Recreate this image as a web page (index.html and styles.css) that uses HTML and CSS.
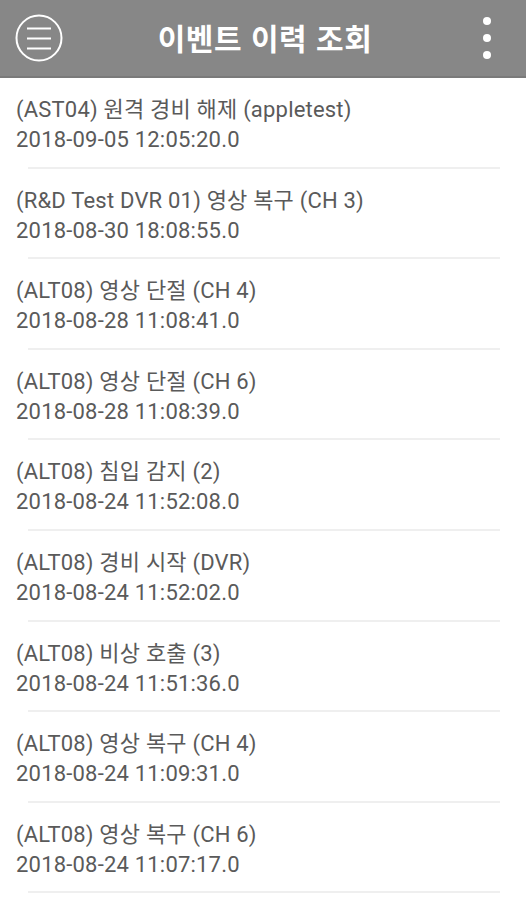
FILE: index.html
```
<!DOCTYPE html>
<html lang="ko">
<head>
<meta charset="utf-8">
<link rel="stylesheet" href="styles.css">
</head>
<body>
<header class="appbar">
  <button class="menu-btn" aria-label="메뉴">
    <svg width="48" height="48" viewBox="0 0 48 48">
      <circle cx="24" cy="24" r="22.5" fill="none" stroke="#fff" stroke-width="2"/>
      <line x1="12" y1="14.5" x2="36" y2="14.5" stroke="#fff" stroke-width="2"/>
      <line x1="12" y1="24.5" x2="36" y2="24.5" stroke="#fff" stroke-width="2"/>
      <line x1="12" y1="34.5" x2="36" y2="34.5" stroke="#fff" stroke-width="2"/>
    </svg>
  </button>
  <h1 class="title">이벤트 이력 조회</h1>
  <button class="more-btn" aria-label="더보기">
    <span class="dot"></span><span class="dot"></span><span class="dot"></span>
  </button>
</header>
<ul class="events">
  <li class="event"><div class="name">(AST04) 원격 경비 해제 (appletest)</div><div class="time">2018-09-05 12:05:20.0</div></li>
  <li class="event"><div class="name">(R&amp;D Test DVR 01) 영상 복구 (CH 3)</div><div class="time">2018-08-30 18:08:55.0</div></li>
  <li class="event"><div class="name">(ALT08) 영상 단절 (CH 4)</div><div class="time">2018-08-28 11:08:41.0</div></li>
  <li class="event"><div class="name">(ALT08) 영상 단절 (CH 6)</div><div class="time">2018-08-28 11:08:39.0</div></li>
  <li class="event"><div class="name">(ALT08) 침입 감지 (2)</div><div class="time">2018-08-24 11:52:08.0</div></li>
  <li class="event"><div class="name">(ALT08) 경비 시작 (DVR)</div><div class="time">2018-08-24 11:52:02.0</div></li>
  <li class="event"><div class="name">(ALT08) 비상 호출 (3)</div><div class="time">2018-08-24 11:51:36.0</div></li>
  <li class="event"><div class="name">(ALT08) 영상 복구 (CH 4)</div><div class="time">2018-08-24 11:09:31.0</div></li>
  <li class="event"><div class="name">(ALT08) 영상 복구 (CH 6)</div><div class="time">2018-08-24 11:07:17.0</div></li>
</ul>
</body>
</html>
```
FILE: styles.css
```
* { box-sizing: border-box; }
html, body { margin: 0; padding: 0; background: #fff; }
body {
  font-family: Roboto, "Noto Sans CJK KR", sans-serif;
  width: 526px;
  height: 900px;
  overflow: hidden;
}
.appbar {
  height: 78px;
  background: #878787;
  border-bottom: 2px solid #7a7a7a;
  display: flex;
  align-items: center;
  position: relative;
}
.menu-btn, .more-btn {
  background: none;
  border: 0;
  padding: 0;
  cursor: pointer;
}
.menu-btn {
  margin-left: 15px;
  width: 48px;
  height: 48px;
  margin-top: -1px;
}
.menu-btn svg { display: block; }
.title {
  flex: 1;
  margin: 0;
  text-align: center;
  color: #fff;
  font-family: "Noto Sans CJK KR", sans-serif;
  font-weight: 700;
  font-size: 30px;
  letter-spacing: 0.5px;
  margin-top: -2px;
  margin-right: 0;
}
.more-btn {
  width: 40px;
  margin-right: 19px;
  display: flex;
  flex-direction: column;
  align-items: center;
  gap: 9px;
  margin-top: -1px;
}
.dot {
  width: 8px;
  height: 8px;
  border-radius: 50%;
  background: #fff;
}
.events {
  list-style: none;
  margin: 0;
  padding: 0;
}
.event {
  padding: 17px 16px 12.6px;
  position: relative;
  color: #5a5a5a;
  font-size: 22px;
  line-height: 30px;
  letter-spacing: 0.2px;
}
.event::after {
  content: "";
  position: absolute;
  left: 28px;
  right: 26px;
  bottom: -1px;
  height: 2px;
  background: #efefef;
}
.event + .event { margin-top: 1px; }
.name, .time { white-space: nowrap; }
```
